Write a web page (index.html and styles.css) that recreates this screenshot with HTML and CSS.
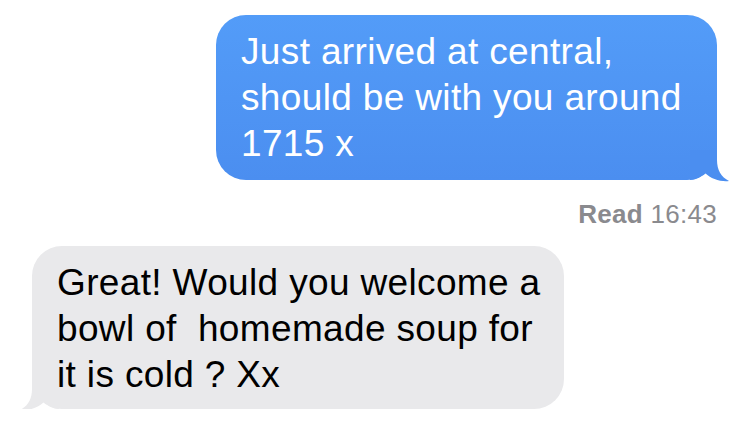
FILE: index.html
```html
<!DOCTYPE html>
<html>
<head>
<meta charset="utf-8">
<link rel="stylesheet" href="styles.css">
</head>
<body>
<div class="thread">
  <div class="bubble sent">
    <p class="text">Just arrived at central, should be with you around 1715 x</p>
    <svg class="tail tail-sent" width="45" height="35" viewBox="0 0 45 35">
      <path d="M0 0 H27 V10 C27 20 31 27 39 31 C31 32 21 29 15 23 C11 27 6 30 0 30 Z" fill="#4b8ef0"/>
    </svg>
  </div>
  <div class="receipt"><span class="read">Read</span> 16:43</div>
  <div class="bubble received">
    <p class="text">Great! Would you welcome a bowl of&nbsp; homemade soup for it is cold ? Xx</p>
    <svg class="tail tail-recv" width="45" height="35" viewBox="0 0 45 35">
      <path d="M45 0 H18 V10 C18 20 14 27 6 31 C14 32 24 29 30 23 C34 27 39 30 45 30 Z" fill="#e9e9eb"/>
    </svg>
  </div>
</div>
</body>
</html>
```
FILE: styles.css
```css
html, body {
  margin: 0;
  padding: 0;
  background: #ffffff;
}
.thread {
  display: flex;
  flex-direction: column;
  padding-top: 15px;
  font-family: "Liberation Sans", Arial, sans-serif;
}
.bubble {
  position: relative;
  box-sizing: border-box;
  border-radius: 30px;
  padding: 14px 20px 13px 25px;
}
.text {
  position: relative;
  z-index: 1;
  margin: 0;
  font-size: 37px;
  line-height: 46px;
  letter-spacing: 0.35px;
}
.sent {
  align-self: flex-end;
  margin-right: 33px;
  width: 501px;
  height: 165px;
  background: linear-gradient(180deg, #539cf8 0%, #4b8ef0 100%);
  color: #ffffff;
}
.received {
  align-self: flex-start;
  margin-left: 32px;
  margin-top: 17px;
  width: 532px;
  height: 163px;
  padding-left: 25px;
  background: #e9e9eb;
  color: #000000;
}
.tail {
  position: absolute;
  bottom: -5px;
}
.tail-sent {
  right: -18px;
}
.tail-recv {
  left: -18px;
}
.receipt {
  align-self: flex-end;
  margin-right: 33px;
  margin-top: 19px;
  font-size: 26px;
  line-height: 30px;
  letter-spacing: 0.3px;
  color: #8a8a8e;
}
.read {
  font-weight: bold;
}
```
